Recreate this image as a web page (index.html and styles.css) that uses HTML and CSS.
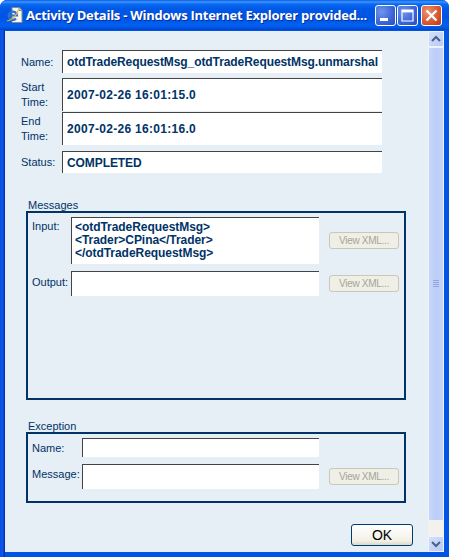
FILE: index.html
```html
<!DOCTYPE html>
<html lang="en">
<head>
<meta charset="utf-8">
<title>Activity Details</title>
<link rel="stylesheet" href="styles.css">
</head>
<body>
<div class="window">
  <header class="titlebar">
    <svg class="appicon" width="18" height="18" viewBox="0 0 18 18">
      <path d="M6 1.5h7l3 3v12H6z" fill="#f6f6f0" stroke="#8c8c80" stroke-width="1"/>
      <path d="M13 1.5v3h3" fill="#dcdcd0" stroke="#8c8c80" stroke-width="1"/>
      <path d="M2.6 9.5h8.4a4.2 4.2 0 1 0-1 3" fill="none" stroke="#2a6fd6" stroke-width="2.2"/>
      <path d="M1 14.5c1 1.5 9-3 11-10" fill="none" stroke="#e3b23c" stroke-width="1.1"/>
    </svg>
    <span class="title">Activity Details - Windows Internet Explorer provided...</span>
    <div class="controls">
      <button class="ctl ctl-blue" aria-label="Minimize"><svg width="21" height="21" viewBox="0 0 21 21"><rect x="5" y="13" width="8" height="3" fill="#fff"/></svg></button>
      <button class="ctl ctl-blue" aria-label="Maximize"><svg width="21" height="21" viewBox="0 0 21 21"><path d="M5 5h11v11H5z" fill="none" stroke="#fff" stroke-width="1.2"/><rect x="5" y="5" width="11" height="2.4" fill="#fff"/></svg></button>
      <button class="ctl ctl-red" aria-label="Close"><svg width="21" height="21" viewBox="0 0 21 21"><path d="M5.5 5.5l10 10M15.5 5.5l-10 10" stroke="#fff" stroke-width="2.4"/></svg></button>
    </div>
  </header>
  <div class="frame">
    <main class="content">
      <div class="row row-name"><label class="lbl">Name:</label><div class="field field-main field-tight">otdTradeRequestMsg_otdTradeRequestMsg.unmarshal</div></div>
      <div class="row row-start"><label class="lbl lbl-two">Start<br>Time:</label><div class="field field-main">2007-02-26 16:01:15.0</div></div>
      <div class="row row-end"><label class="lbl lbl-two">End<br>Time:</label><div class="field field-main">2007-02-26 16:01:16.0</div></div>
      <div class="row row-status"><label class="lbl">Status:</label><div class="field field-main field-tight">COMPLETED</div></div>

      <section class="group group-messages">
        <h2 class="legend">Messages</h2>
        <div class="box box-messages">
          <div class="msg msg-input">
            <label class="lbl">Input:</label>
            <div class="field field-area">&lt;otdTradeRequestMsg&gt;<br>&lt;Trader&gt;CPina&lt;/Trader&gt;<br>&lt;/otdTradeRequestMsg&gt;</div>
            <button class="xml" disabled>View XML...</button>
          </div>
          <div class="msg msg-output">
            <label class="lbl lbl-up">Output:</label>
            <div class="field field-out"></div>
            <button class="xml" disabled>View XML...</button>
          </div>
        </div>
      </section>

      <section class="group group-exception">
        <h2 class="legend">Exception</h2>
        <div class="box box-exception">
          <div class="exc exc-name">
            <label class="lbl">Name:</label>
            <div class="field field-excname"></div>
          </div>
          <div class="exc exc-msg">
            <label class="lbl lbl-up">Message:</label>
            <div class="field field-excmsg"></div>
            <button class="xml" disabled>View XML...</button>
          </div>
        </div>
      </section>

      <div class="actions"><button class="ok">OK</button></div>
    </main>
    <aside class="scrollbar">
      <div class="sb-btn"><svg width="14" height="14" viewBox="0 0 14 14"><path d="M3 9l4-4 4 4" fill="none" stroke="#4d6185" stroke-width="2"/></svg></div>
      <div class="sb-thumb"><svg width="8" height="8" viewBox="0 0 8 8"><path d="M1 .5h6M1 2.5h6M1 4.5h6M1 6.5h6" stroke="#8fa6e0" stroke-width="1"/></svg></div>
      <div class="sb-track"></div>
      <div class="sb-btn"><svg width="14" height="14" viewBox="0 0 14 14"><path d="M3 5l4 4 4-4" fill="none" stroke="#4d6185" stroke-width="2"/></svg></div>
    </aside>
  </div>
</div>
</body>
</html>
```
FILE: styles.css
```css
* { box-sizing: border-box; }
html, body { margin: 0; padding: 0; background: #fff; }
body { width: 449px; height: 557px; overflow: hidden; }

.window {
  width: 449px; height: 557px;
  display: flex; flex-direction: column;
  border-radius: 7px 7px 0 0;
  overflow: hidden;
  background: #0831d9;
}

.titlebar {
  height: 30px; flex: none;
  display: flex; align-items: center;
  padding: 0 7px 0 6px;
  background: linear-gradient(180deg, #0a5fe6 0, #3d95ff 2px, #0a6af2 4px, #0058e6 9px, #0054e3 18px, #0060f0 25px, #0055e5 28px, #0040c8 30px);
}
.appicon { flex: none; margin-right: 2px; }
.title {
  flex: 1; white-space: nowrap;
  font: bold 13px "Open Sans", "DejaVu Sans", sans-serif;
  letter-spacing: -0.26px;
  color: #fff; text-shadow: 1px 1px 0 #0a2f9a;
}
.controls { display: flex; gap: 1px; }
.ctl {
  width: 21px; height: 21px; padding: 0; display: block;
  border: 1px solid #fff; border-radius: 3px;
}
.ctl svg { display: block; margin: -1px; }
.ctl-blue { background: radial-gradient(circle at 30% 30%, #6f96ea, #3c64d8 60%, #2a4cc0); }
.ctl-red { margin-left: 2px; background: radial-gradient(circle at 30% 30%, #ec9270, #d9552f 60%, #b83a1a); }

.frame {
  flex: 1; display: flex; min-height: 0;
  padding: 1px 5px 5px 5px;
  background: linear-gradient(90deg, #0a4fe0 0, #0a5cf0 3px, #0831b0 4px, #0831b0 5px, transparent 5px), linear-gradient(180deg, #0055e5 0, #0055e5 100%);
}

.content {
  flex: 1; min-width: 0;
  background: #e6eef6;
  padding: 19px 0 0 0;
  color: #003366;
  font: 11px "Liberation Sans", Arial, sans-serif;
}

.row { display: flex; align-items: center; }
.row-name { height: 23px; }
.row-start { height: 33px; margin-top: 5px; }
.row-end { height: 33px; margin-top: 1px; }
.row-status { height: 22px; margin-top: 6px; }
.row .lbl { width: 57px; padding-left: 16px; flex: none; }

.lbl { font-size: 11px; line-height: 14px; color: #003366; }
.lbl-two { line-height: 15px; }
.lbl-up { position: relative; top: -3px; }

.field {
  background: #fff;
  border-top: 1px solid #444;
  border-left: 1px solid #444;
  font: bold 12px "Liberation Sans", sans-serif;
  color: #003366;
}
.field-main {
  width: 320px; height: 100%;
  display: flex; align-items: center;
  padding-left: 4px;
  letter-spacing: 0.3px;
  white-space: nowrap;
}
.field-tight { letter-spacing: -0.08px; }

.group { margin-left: 21px; width: 380px; }
.group-messages { margin-top: 25px; }
.group-exception { margin-top: 19px; }
.legend {
  margin: 0 0 0 2px;
  height: 13px;
  font: 11px/15px "Liberation Sans", Arial, sans-serif;
  color: #003366;
}
.box { border: 2px solid #003366; padding: 4px 7px 0 4px; }
.box-messages { height: 189px; }
.box-exception { height: 71px; }

.msg { display: grid; grid-template-columns: 39px 248px 80px; }
.msg .xml { margin-left: 10px; }
.msg .lbl { padding-top: 2px; }
.msg-input { height: 47px; align-items: center; }
.msg-input .lbl { align-self: start; }
.msg-output { height: 25px; margin-top: 7px; align-items: center; }

.field-area {
  height: 47px;
  padding: 3px 0 0 3px;
  line-height: 13px;
  white-space: nowrap;
  letter-spacing: -0.05px;
}
.field-out { height: 25px; }

.exc { display: grid; align-items: center; grid-template-columns: 50px 237px 80px; }
.exc .xml { margin-left: 10px; }
.exc-name { height: 19px; }
.exc-msg { height: 25px; margin-top: 7px; }
.field-excname { height: 19px; }
.field-excmsg { height: 25px; }

.xml {
  width: 70px; height: 17px; padding: 0;
  background: #f0efe6;
  border: 1px solid #c9c7ba;
  border-radius: 3px;
  font: 10px "Liberation Sans", Arial, sans-serif;
  letter-spacing: -0.3px;
  color: #a5a597;
}

.actions { display: flex; justify-content: flex-end; padding: 21px 15px 0 0; }
.ok {
  width: 62px; height: 22px; padding: 0;
  background: linear-gradient(180deg, #fff, #f2f0e6 80%, #dcd8c8);
  border: 1px solid #003c74;
  border-radius: 3px;
  font: 14px "Liberation Sans", Arial, sans-serif;
  color: #000;
}

.scrollbar { width: 16px; flex: none; display: flex; flex-direction: column; background: #f3f1ec; }
.sb-btn {
  height: 16px; flex: none;
  background: linear-gradient(135deg, #d4e0fb, #b8cbf6);
  border: 1px solid #eef2fd; border-radius: 2px;
}
.sb-btn svg { display: block; }
.sb-thumb {
  height: 474px; flex: none;
  display: flex; align-items: center; justify-content: center;
  background: linear-gradient(90deg, #c9d6f8, #bccdf7 50%, #c4d3f8);
  border: 1px solid #eef2fd; border-radius: 2px;
}
.sb-thumb svg { display: block; }
.sb-track { flex: 1; }
```
